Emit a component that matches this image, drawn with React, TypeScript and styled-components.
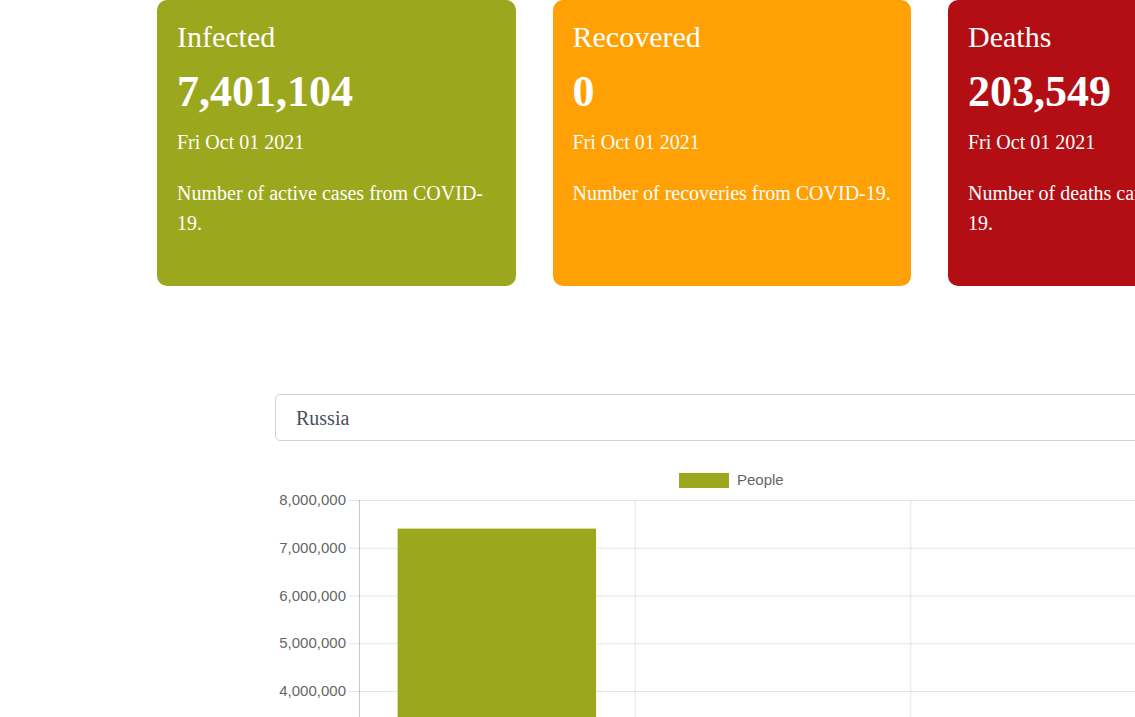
import React from "react";
import styled, { createGlobalStyle } from "styled-components";

const GlobalStyle = createGlobalStyle`
  html, body {
    margin: 0;
    padding: 0;
    overflow: hidden;
    background: #ffffff;
  }
  body {
    font-family: "Liberation Serif", "Times New Roman", serif;
  }
`;

const Page = styled.div`
  width: 1462px;
  display: flex;
  flex-direction: column;
  align-items: center;
`;

const CardRow = styled.div`
  display: grid;
  grid-template-columns: repeat(3, 358.5px);
  column-gap: 37px;
  padding-left: 1.5px;
`;

const Card = styled.div<{ $bg: string }>`
  background: ${(p) => p.$bg};
  color: #ffffff;
  border-radius: 10px;
  height: 286px;
  box-sizing: border-box;
  padding: 19px 20px 0 20px;
`;

const Title = styled.div`
  font-size: 30px;
  line-height: 36px;
`;

const Count = styled.div`
  font-size: 44px;
  line-height: 52.8px;
  font-weight: 700;
  margin-top: 11px;
`;

const DateLine = styled.div`
  font-size: 20px;
  line-height: 30px;
  margin-top: 8.5px;
`;

const Desc = styled.div`
  font-size: 20px;
  line-height: 30px;
  margin-top: 20.5px;
`;

const ChartSection = styled.div`
  width: 912px;
  margin-top: 108px;
  display: flex;
  flex-direction: column;
`;

const CountrySelect = styled.select`
  appearance: none;
  -webkit-appearance: none;
  width: 100%;
  height: 47px;
  box-sizing: border-box;
  border: 1px solid #ced4da;
  border-radius: 5px;
  background: #ffffff;
  padding: 0 20px;
  font-family: "Liberation Serif", "Times New Roman", serif;
  font-size: 20px;
  color: #495057;
  outline: none;
`;

const ChartWrap = styled.div`
  margin-top: 19px;
  height: 460px;
`;

const cards = [
  {
    title: "Infected",
    value: "7,401,104",
    bg: "#9ba71c",
    desc: "Number of active cases from COVID-19.",
  },
  {
    title: "Recovered",
    value: "0",
    bg: "#ffa104",
    desc: "Number of recoveries from COVID-19.",
  },
  {
    title: "Deaths",
    value: "203,549",
    bg: "#b30e13",
    desc: "Number of deaths caused by COVID-19.",
  },
];

const data = [7401104, 0, 203549];

function BarChart() {
  const left = 84;
  const top = 40;
  const perMillion = 47.75;
  const catW = 275.67;
  const zeroY = top + 8 * perMillion;
  const right = left + catW * 3;
  const ticks = [8, 7, 6, 5, 4, 3, 2, 1, 0];
  return (
    <svg width="912" height="460" viewBox="0 0 912 460">
      <rect x="404" y="13" width="50" height="15" fill="#9ba71c" />
      <text
        x="462"
        y="25"
        fontFamily="Liberation Sans, Arial, sans-serif"
        fontSize="15"
        fill="#666666"
      >
        People
      </text>
      {ticks.map((t) => {
        const y = top + (8 - t) * perMillion;
        return (
          <g key={t}>
            <line x1={left - 10} x2={right} y1={y + 0.5} y2={y + 0.5} stroke="rgba(0,0,0,0.1)" strokeWidth="1" />
            <text
              x={left - 13}
              y={y + 5}
              textAnchor="end"
              fontFamily="Liberation Sans, Arial, sans-serif"
              fontSize="15"
              fill="#666666"
            >
              {t === 0 ? "0" : `${t},000,000`}
            </text>
          </g>
        );
      })}
      {[1, 2, 3].map((i) => (
        <line
          key={i}
          x1={left + catW * i + 0.5}
          x2={left + catW * i + 0.5}
          y1={top}
          y2={zeroY + 10}
          stroke="rgba(0,0,0,0.1)"
          strokeWidth="1"
        />
      ))}
      <line x1={left + 0.5} x2={left + 0.5} y1={top} y2={zeroY + 10} stroke="rgba(0,0,0,0.22)" strokeWidth="1" />
      {data.map((v, i) => {
        const h = (v / 1000000) * perMillion;
        const w = catW * 0.72;
        const x = left + catW * i + (catW - w) / 2;
        return <rect key={i} x={x} y={zeroY - h} width={w} height={h} fill="#9ba71c" />;
      })}
    </svg>
  );
}

export default function App() {
  return (
    <>
      <GlobalStyle />
      <Page>
        <CardRow>
          {cards.map((c) => (
            <Card key={c.title} $bg={c.bg}>
              <Title>{c.title}</Title>
              <Count>{c.value}</Count>
              <DateLine>Fri Oct 01 2021</DateLine>
              <Desc>{c.desc}</Desc>
            </Card>
          ))}
        </CardRow>
        <ChartSection>
          <CountrySelect defaultValue="Russia">
            <option value="Russia">Russia</option>
          </CountrySelect>
          <ChartWrap>
            <BarChart />
          </ChartWrap>
        </ChartSection>
      </Page>
    </>
  );
}
